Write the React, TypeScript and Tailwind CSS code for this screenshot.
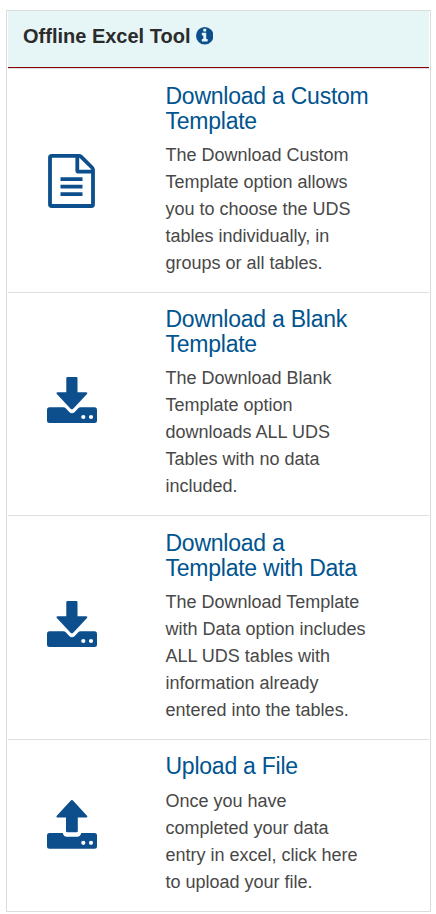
const blue = "text-[#0d4f8c]"

type IconKind = "file" | "download" | "upload"

interface ToolOption {
  icon: IconKind
  title: string[]
  text: string[]
}

const options: ToolOption[] = [
  {
    icon: "file",
    title: ["Download a Custom", "Template"],
    text: [
      "The Download Custom",
      "Template option allows",
      "you to choose the UDS",
      "tables individually, in",
      "groups or all tables.",
    ],
  },
  {
    icon: "download",
    title: ["Download a Blank", "Template"],
    text: [
      "The Download Blank",
      "Template option",
      "downloads ALL UDS",
      "Tables with no data",
      "included.",
    ],
  },
  {
    icon: "download",
    title: ["Download a", "Template with Data"],
    text: [
      "The Download Template",
      "with Data option includes",
      "ALL UDS tables with",
      "information already",
      "entered into the tables.",
    ],
  },
  {
    icon: "upload",
    title: ["Upload a File"],
    text: [
      "Once you have",
      "completed your data",
      "entry in excel, click here",
      "to upload your file.",
    ],
  },
]

function InfoIcon() {
  return (
    <svg viewBox="128 128 1536 1536" className={`w-[17.5px] h-[17.5px] ${blue}`} fill="currentColor">
      <path d="M1152 1376v-160q0-14-9-23t-23-9h-96V672q0-14-9-23t-23-9H672q-14 0-23 9t-9 23v160q0 14 9 23t23 9h96v320h-96q-14 0-23 9t-9 23v160q0 14 9 23t23 9h448q14 0 23-9t9-23zM1024 480V320q0-14-9-23t-23-9H800q-14 0-23 9t-9 23v160q0 14 9 23t23 9h192q14 0 23-9t9-23zM1664 896a768 768 0 1 1-1536 0 768 768 0 1 1 1536 0z" />
    </svg>
  )
}

function FileIcon() {
  return (
    <svg
      viewBox="0 0 47 54"
      className="w-[47px] h-[54px] mt-[84.7px]"
      fill="none"
      stroke="currentColor"
      strokeWidth="3.8"
      strokeLinejoin="round"
      strokeLinecap="round"
    >
      <path d="M3.500 1.900H31q1.200 0 2 .8L44 13.500q1 1 1 2.200V50.500q0 1.500-1.500 1.500H3.500Q2 52 2 50.500V3.400Q2 1.900 3.500 1.900z" />
      <path d="M29.300 2.500V16.500q0 1.200 1.200 1.200H44" />
      <path d="M12.500 25.200h22M12.500 32.700h22M12.500 40.200h22" strokeLinecap="butt" />
    </svg>
  )
}

function DownloadIcon() {
  return (
    <svg viewBox="0 0 50 46" className="w-[50px] h-[46px] mt-[84.5px]" fill="currentColor">
      <path d="M20.500 0h8.800q1.200 0 1.200 1.200V15.300h8.600q2 0 .9 1.600L26.200 31.700q-1.300 1.300-2.600 0L9.800 16.900q-1.100-1.600.9-1.600h8.600V1.200q0-1.200 1.200-1.200z" />
      <path
        fillRule="evenodd"
        d="M2.500 30.200H16.500q1.200 0 2 .8l4 4.200q2.500 2.200 5 0l4-4.200q.8-.8 2-.8H47.500q2.500 0 2.500 2.500V43.500q0 2.500-2.500 2.500h-45Q0 46 0 43.500V32.700q0-2.500 2.500-2.500zM36.300 37.900a2.100 2.100 0 1 0 0 4.200 2.100 2.100 0 0 0 0-4.200zm7.700 0a2.100 2.100 0 1 0 0 4.200 2.100 2.100 0 0 0 0-4.200z"
      />
    </svg>
  )
}

function UploadIcon() {
  return (
    <svg viewBox="0 0 50 49" className="w-[50px] h-[49px] mt-[60px]" fill="currentColor">
      <path d="M23.600.7q1.300-1.300 2.600 0L40 15.800q1.100 1.600-.9 1.600h-8.300V31q0 1.200-1.200 1.200h-9.400q-1.200 0-1.200-1.200V17.400h-8.300q-2 0-.9-1.600z" />
      <path
        fillRule="evenodd"
        d="M2.500 33H15.800q.7 3.700 4 3.700h10.400q3.300 0 4-3.700H47.500q2.500 0 2.500 2.500v10.800q0 2.500-2.500 2.500h-45Q0 48.800 0 46.300V35.500Q0 33 2.500 33zM36.300 40.700a2.100 2.100 0 1 0 0 4.200 2.100 2.100 0 0 0 0-4.200zm7.700 0a2.100 2.100 0 1 0 0 4.200 2.100 2.100 0 0 0 0-4.200z"
      />
    </svg>
  )
}

export default function App() {
  return (
    <div className="h-[914px] bg-white pt-[10px] pl-[6px] font-['Liberation_Sans',Arial,sans-serif]">
      <div className="w-[425px] h-[902px] border border-[#dcdcdc] px-px">
        <header className="h-[57px] flex items-center gap-[5.5px] bg-[#e6f5f5] border-b border-[#8b0000] pl-[15px] pb-1.5">
          <h1 className="text-[20px] font-bold text-[#2b2b2b]">Offline Excel Tool</h1>
          <InfoIcon />
        </header>
        <div className="h-px bg-[#dcdfe3]" />
        {options.map((option, i) => (
          <section key={i} className="group flex h-[223.5px] border-b border-[#dcdfe3] last:h-auto last:border-b-0">
            <div className={`w-[127px] flex items-start justify-center ${blue}`}>
              {option.icon === "file" && <FileIcon />}
              {option.icon === "download" && <DownloadIcon />}
              {option.icon === "upload" && <UploadIcon />}
            </div>
            <div className="pl-[30.5px] pt-[14.7px]">
              <h2 className="text-[23px] leading-[25px] tracking-[-0.24px] text-[#00548f]">
                {option.title.map((line) => (
                  <span key={line} className="block">{line}</span>
                ))}
              </h2>
              <p className="mt-2 group-last:mt-[9px] text-[18px] leading-[27px] text-[#484848]">
                {option.text.map((line) => (
                  <span key={line} className="block">{line}</span>
                ))}
              </p>
            </div>
          </section>
        ))}
      </div>
    </div>
  )
}
